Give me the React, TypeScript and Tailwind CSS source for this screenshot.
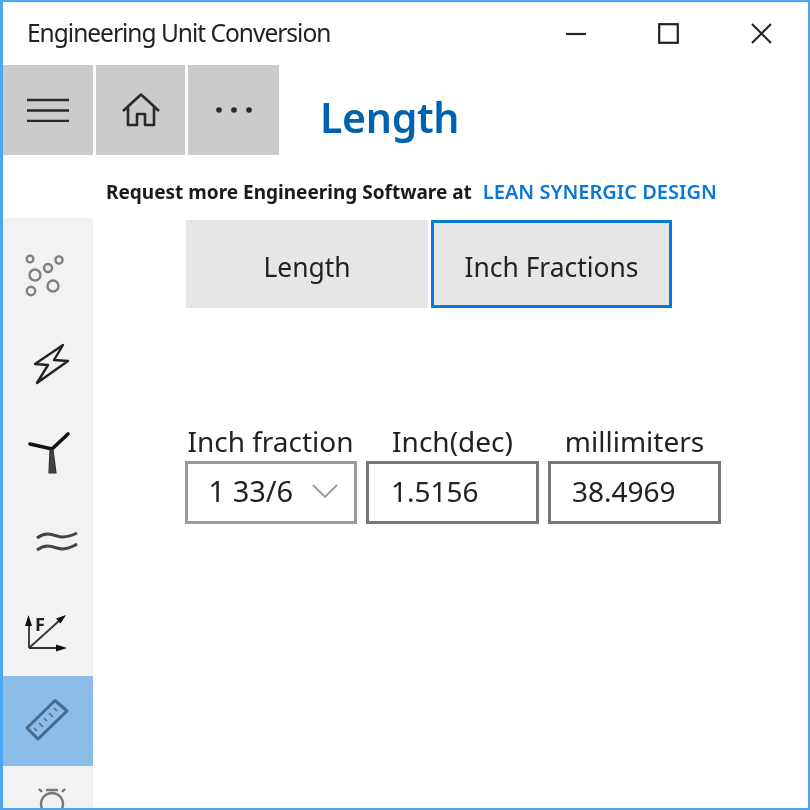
import React from "react";

function Item({ y, active, children }: { y: number; active?: boolean; children: React.ReactNode }) {
  return (
    <div className={active ? "flex h-[90px] shrink-0 items-center justify-center bg-[#8cbde9]" : "flex h-[90px] shrink-0 items-center justify-center"}>
      <svg width="60" height="60" viewBox={`18 ${y - 30} 60 60`} fill="none">{children}</svg>
    </div>
  );
}

function Field({ label, outer, children }: { label: string; outer: string; children: React.ReactNode }) {
  return (
    <div className="flex w-[173px] flex-col items-center">
      <div className="h-[38px] whitespace-nowrap pb-[2px] text-[28px] leading-[36px] text-[#222]">{label}</div>
      <div className={outer}>{children}</div>
    </div>
  );
}

export default function App() {
  return (
    <div className="h-[810px] w-[810px] overflow-hidden bg-white font-['Noto_Sans','Open_Sans',sans-serif] blur-[0.7px]">
      <div className="flex h-full w-full flex-col overflow-hidden border-t-2 border-r-2 border-b-2 border-l-[3px] border-[#4ea5f2]">
        <div className="flex h-[63px] shrink-0 items-center pl-[24px] pr-[36px]">
          <div className="flex-1 text-[24.5px] leading-none tracking-[-1px] text-[#222]">Engineering Unit Conversion</div>
          <div className="flex items-center gap-[72px]">
            <svg width="20" height="21" viewBox="0 0 20 21"><path d="M0 11h20" stroke="#222" strokeWidth="2.2" /></svg>
            <svg width="21" height="21" viewBox="0 0 21 21" fill="none"><rect x="1.2" y="1.2" width="18.6" height="18.6" stroke="#222" strokeWidth="2.2" /></svg>
            <svg width="21" height="21" viewBox="0 0 21 21" fill="none"><path d="M1 1l19 19M20 1L1 20" stroke="#222" strokeWidth="2" /></svg>
          </div>
        </div>

        <div className="flex h-[90px] shrink-0 items-stretch">
          <div className="flex w-[90px] items-center justify-center bg-[#cbcbcb]">
            <svg width="42" height="24" viewBox="0 0 42 24"><path d="M0 2h42M0 12.5h42M0 23h42" stroke="#2a2a2a" strokeWidth="2.4" /></svg>
          </div>
          <div className="ml-[3px] flex w-[89px] items-center justify-center bg-[#cbcbcb]">
            <svg width="38" height="34" viewBox="0 0 38 34" fill="none" stroke="#2a2a2a" strokeWidth="2.6" strokeLinejoin="round">
              <path d="M1 18L19 1.5 37 18M6 14v18h9V21h8v11h9V14" />
            </svg>
          </div>
          <div className="ml-[3px] flex w-[91px] items-center justify-center bg-[#cbcbcb]">
            <svg width="36" height="6" viewBox="0 0 36 6" fill="#2a2a2a">
              <circle cx="3" cy="3" r="2.8" /><circle cx="18" cy="3" r="2.8" /><circle cx="33" cy="3" r="2.8" />
            </svg>
          </div>
          <div className="ml-[41px] self-center pt-[14px] text-[41px] font-semibold leading-none tracking-[-0.3px] text-[#0063b1]">Length</div>
        </div>

        <div className="flex h-[63px] shrink-0 items-center pl-[103px] pt-[11px]">
          <span className="text-[19px] font-bold leading-none text-[#1a1a1a]">Request more Engineering Software at</span>
          <span className="ml-[11px] text-[20px] font-semibold leading-none text-[#0a78d8]">LEAN SYNERGIC DESIGN</span>
        </div>

        <div className="flex min-h-0 flex-1">
          <div className="flex w-[90px] shrink-0 flex-col overflow-hidden bg-[#f2f2f2] pt-[8px]">
            <Item y={270}>
              <g stroke="#808080" strokeWidth="2.4">
                <circle cx="30" cy="258" r="3.4" /><circle cx="59" cy="259" r="3.6" /><circle cx="48" cy="267" r="4" />
                <circle cx="35" cy="274" r="5.5" /><circle cx="53" cy="285" r="5.5" /><circle cx="31" cy="290" r="4.2" />
              </g>
            </Item>
            <Item y={360}>
              <path d="M63 344L35 363l13 1-11 18 31-22-14-1z" stroke="#222" strokeWidth="2.4" strokeLinejoin="round" />
            </Item>
            <Item y={450}>
              <path d="M52 448L68 433M52 448L30 443" stroke="#111" strokeWidth="3.6" strokeLinecap="round" />
              <path d="M50 449l-1 23h7l-3-23z" fill="#444" stroke="#333" strokeWidth="1.2" />
            </Item>
            <Item y={540}>
              <path d="M37 537c8-6 14-4 20-2s12 1 20-3M37 549c8-6 14-4 20-2s12 1 20-4" stroke="#444" strokeWidth="3" />
            </Item>
            <Item y={630}>
              <path d="M29 647V622M29 647H60M29 647L60 619" stroke="#333" strokeWidth="1.8" />
              <path d="M28.5 614l-3.5 11h7zM67 647l-11-3.5v7zM66 614l-10 3.5 4.5 5z" fill="#111" />
              <text x="35" y="630" fontSize="18" fontWeight="700" fill="#222" fontFamily="Noto Sans, sans-serif">F</text>
            </Item>
            <Item y={720} active>
              <g stroke="#47698a">
                <path d="M55 699.5L67 710 38 738 27 727z" strokeWidth="3" strokeLinejoin="round" />
                <path d="M34 727l3 3M39 722l4 4M44 717l3 3M49 712l4 4M54 707l3 3" strokeWidth="1.4" />
              </g>
            </Item>
            <Item y={810}>
              <g stroke="#777" strokeWidth="2.4">
                <circle cx="52" cy="803" r="11" />
                <path d="M46 789h12M39 788l3 3M65 788l-3 3" />
              </g>
            </Item>
          </div>

          <div className="flex min-w-0 flex-1 flex-col pl-[93px] pt-[2px]">
            <div className="flex h-[88px]">
              <div className="flex w-[242px] items-center justify-center bg-[#e6e6e6] pt-[8px] text-[26.4px] text-[#222]">Length</div>
              <div className="ml-[3px] flex w-[241px] items-center justify-center border-[3px] border-[#0a78d8] bg-[#e6e6e6] pt-[8px] text-[26.4px] text-[#222]">Inch Fractions</div>
            </div>
            <div className="ml-[-2px] mt-[115px] flex gap-[9px]">
              <Field label="Inch fraction" outer="flex h-[63px] w-[172px] items-center justify-between border-[3px] border-[#9a9a9a] pb-[3px] pl-[21px] pr-[16px] text-[29px] text-[#222]">
                <span>1 33/6</span>
                <svg width="26" height="14" viewBox="0 0 26 14" fill="none"><path d="M1 1l12 12L25 1" stroke="#999" strokeWidth="1.8" /></svg>
              </Field>
              <Field label="Inch(dec)" outer="flex h-[63px] w-[173px] items-center border-[3px] border-[#777] pb-[3px] pl-[22px] text-[28px] text-[#222]">
                <span>1.5156</span>
              </Field>
              <Field label="millimiters" outer="flex h-[63px] w-[173px] items-center border-[3px] border-[#777] pb-[3px] pl-[21px] text-[28px] text-[#222]">
                <span>38.4969</span>
              </Field>
            </div>
          </div>
        </div>
      </div>
    </div>
  );
}
